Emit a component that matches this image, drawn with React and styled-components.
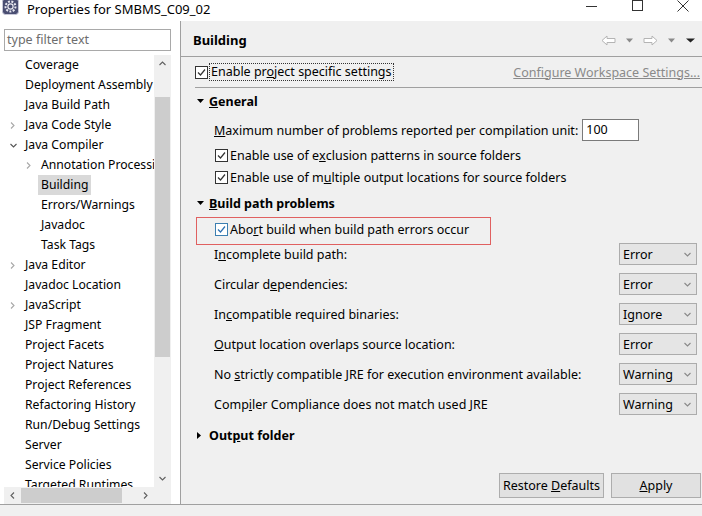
import styled, { createGlobalStyle } from "styled-components";

const GlobalStyle = createGlobalStyle`
  body {
    margin: 0;
    font-family: "Noto Sans", "Liberation Sans", sans-serif;
    font-size: 12px;
    color: #000;
  }
`;

const Window = styled.div`
  width: 702px;
  height: 516px;
  display: flex;
  flex-direction: column;
  overflow: hidden;
  background: #f0f0f0;
`;

const TitleBar = styled.div`
  height: 21px;
  flex-shrink: 0;
  background: #fff;
  display: flex;
  align-items: flex-start;
`;

const TitleIcon = styled.svg`
  margin: -2px 0 0 2px;
`;

const TitleText = styled.div`
  margin-left: 8px;
  font-size: 13px;
  line-height: 18px;
`;

const Controls = styled.div`
  margin-left: auto;
  margin-right: -4px;
  display: flex;
`;

const Ctrl = styled.div`
  width: 46px;
  height: 12px;
  display: flex;
  justify-content: center;
  align-items: flex-start;
`;

const Body = styled.div`
  flex: 1;
  display: flex;
  min-height: 0;
`;

const Sidebar = styled.div`
  width: 181px;
  box-sizing: border-box;
  background: #fff;
  border-right: 1px solid #a0a0a0;
  display: flex;
  flex-direction: column;
  padding: 8px 9px 0 4px;
`;

const Filter = styled.div`
  height: 22px;
  box-sizing: border-box;
  border: 1px solid #a9a9a9;
  color: #6d6d6d;
  padding-left: 2px;
  line-height: 20px;
  font-size: 12.5px;
`;

const TreeBox = styled.div`
  margin-top: 4px;
  flex: 1;
  min-height: 0;
  display: grid;
  grid-template-columns: 1fr 17px;
  grid-template-rows: 1fr 17px;
`;

const TreeList = styled.div`
  overflow: hidden;
`;

const TreeRow = styled.div`
  height: 20px;
  display: flex;
  align-items: center;
  padding-left: ${(p) => p.$level * 16 - 11}px;
  white-space: nowrap;
`;

const ArrowSlot = styled.div`
  width: 16px;
  flex-shrink: 0;
  display: flex;
  align-items: center;
  padding-left: 1px;
  box-sizing: border-box;
`;

const TreeLabel = styled.span`
  line-height: 20px;
  padding: 0 3px;
  margin-left: -3px;
  background: ${(p) => (p.$selected ? "#d9d9d9" : "transparent")};
  font-size: 12.2px;
`;

const VScroll = styled.div`
  background: #f0f0f0;
  display: flex;
  flex-direction: column;
`;

const HScroll = styled.div`
  background: #f0f0f0;
  display: flex;
`;

const ScrollBtn = styled.div`
  width: 17px;
  height: 17px;
  flex-shrink: 0;
  display: flex;
  align-items: center;
  justify-content: center;
`;

const VTrack = styled.div`
  flex: 1;
  padding: 0 1px;
`;

const VThumb = styled.div`
  margin-top: ${(p) => p.$offset}px;
  height: ${(p) => p.$size}px;
  background: #cdcdcd;
`;

const HTrack = styled.div`
  flex: 1;
  padding: 1px 0;
  display: flex;
`;

const HThumb = styled.div`
  margin-left: ${(p) => p.$offset}px;
  width: ${(p) => p.$size}px;
  background: #cdcdcd;
`;

const Corner = styled.div`
  background: #f0f0f0;
`;

const Main = styled.div`
  flex: 1;
  display: flex;
  flex-direction: column;
  min-width: 0;
`;

const Header = styled.div`
  height: 35px;
  flex-shrink: 0;
  border-bottom: 1px solid #a0a0a0;
  display: flex;
  align-items: center;
  padding: 0 7px 0 12px;
`;

const HeaderTitle = styled.div`
  font-weight: bold;
  font-size: 13px;
  margin-top: 2px;
`;

const NavIcons = styled.div`
  margin-left: auto;
  display: flex;
  align-items: center;
  margin-top: 4px;
`;

const NavGap = styled.span`
  width: ${(p) => p.$w}px;
`;

const Content = styled.div`
  flex: 1;
  display: flex;
  flex-direction: column;
  padding: 0 0 6px 14px;
`;

const ProjectRow = styled.div`
  margin-top: 5px;
  height: 20px;
  display: flex;
  align-items: center;
  padding-right: 2px;
`;

const FocusLabel = styled.span`
  padding: 0 1px;
  outline: 1px dotted #333;
  line-height: 16px;
  font-size: 12.5px;
`;

const WorkspaceLink = styled.span`
  margin-left: auto;
  color: #8a8a8a;
  text-decoration: underline;
  font-size: 12.5px;
`;

const Separator = styled.div`
  margin-top: 5px;
  height: 1px;
  background: #a0a0a0;
`;

const SectionHead = styled.div`
  margin-top: ${(p) => p.$top}px;
  height: 20px;
  display: flex;
  align-items: center;
  font-weight: bold;
  font-size: 12.5px;
`;

const Twisty = styled.div`
  width: 14px;
  display: flex;
  align-items: center;
  padding-left: 2px;
  box-sizing: border-box;
`;

const Row = styled.div`
  margin-top: ${(p) => p.$top || 0}px;
  height: 22px;
  display: flex;
  align-items: center;
  padding-left: ${(p) => (p.$check ? 20 : 19)}px;
  font-size: 12.5px;
  white-space: nowrap;
`;

const NumberBox = styled.div`
  margin-left: 4px;
  width: 57px;
  height: 22px;
  box-sizing: border-box;
  background: #fff;
  border: 1px solid #7a7a7a;
  padding-left: 3px;
  line-height: 20px;
`;

const Box = styled.div`
  width: 13px;
  height: 13px;
  box-sizing: border-box;
  border: 1px solid ${(p) => (p.$hot ? "#3c7fb1" : "#333")};
  background: #fff;
  flex-shrink: 0;
  display: flex;
  align-items: center;
  justify-content: center;
  margin-right: 2px;
`;

const Highlight = styled.div`
  margin-top: 4px;
  margin-left: 1px;
  width: 295px;
  height: 28px;
  box-sizing: border-box;
  border: 1px solid #e06060;
  display: flex;
  align-items: center;
  padding-left: 18px;
  padding-bottom: 4px;
  font-size: 12.5px;
`;

const OptionList = styled.div`
  margin-top: -2px;
  display: flex;
  flex-direction: column;
  gap: 8px;
  padding-right: 5px;
`;

const OptionRow = styled.div`
  height: 22px;
  display: flex;
  align-items: center;
  padding-left: 19px;
  font-size: 12.5px;
`;

const Select = styled.div`
  margin-left: auto;
  width: 78px;
  height: 22px;
  box-sizing: border-box;
  background: #e5e5e5;
  border: 1px solid #acacac;
  display: flex;
  align-items: center;
  padding: 0 5px 0 3px;
  font-size: 12.5px;
  justify-content: space-between;
`;

const ButtonBar = styled.div`
  margin-top: auto;
  display: flex;
  justify-content: flex-end;
  gap: 7px;
  padding-right: 1px;
`;

const Button = styled.div`
  width: ${(p) => p.$w}px;
  height: 25px;
  box-sizing: border-box;
  background: #e1e1e1;
  border: 1px solid #adadad;
  display: flex;
  align-items: center;
  justify-content: center;
  font-size: 12.5px;
`;

const BottomStrip = styled.div`
  height: 12px;
  flex-shrink: 0;
  box-sizing: border-box;
  border-top: 1px solid #a0a0a0;
  background: #f0f0f0;
`;

const Chevron = ({ dir, color = "#777" }) => {
  const paths = {
    right: "M1 0.5 L4 3.5 L1 6.5",
    down: "M0.5 1 L3.5 4 L6.5 1",
    up: "M0.5 4 L3.5 1 L6.5 4",
    left: "M4 0.5 L1 3.5 L4 6.5",
  };
  const horizontal = dir === "right" || dir === "left";
  return (
    <svg width={horizontal ? 5 : 7} height={horizontal ? 7 : 5} viewBox={horizontal ? "0 0 5 7" : "0 0 7 5"}>
      <path d={paths[dir]} fill="none" stroke={color} strokeWidth="1.1" />
    </svg>
  );
};

const Triangle = ({ open, color = "#000" }) =>
  open ? (
    <svg width="7" height="4" viewBox="0 0 7 4">
      <path d="M0 0 H7 L3.5 4 Z" fill={color} />
    </svg>
  ) : (
    <svg width="4" height="7" viewBox="0 0 4 7">
      <path d="M0 0 V7 L4 3.5 Z" fill={color} />
    </svg>
  );

const Check = ({ color = "#333" }) => (
  <svg width="9" height="9" viewBox="0 0 9 9">
    <path d="M1 4.5 L3.5 7 L8 1.5" fill="none" stroke={color} strokeWidth="1.2" />
  </svg>
);

const CheckBox = ({ hot }) => (
  <Box $hot={hot}>
    <Check color={hot ? "#2d6fb0" : "#333"} />
  </Box>
);

const tree = [
  { label: "Coverage", level: 1 },
  { label: "Deployment Assembly", level: 1 },
  { label: "Java Build Path", level: 1 },
  { label: "Java Code Style", level: 1, arrow: "right" },
  { label: "Java Compiler", level: 1, arrow: "down" },
  { label: "Annotation Processing", level: 2, arrow: "right" },
  { label: "Building", level: 2, selected: true },
  { label: "Errors/Warnings", level: 2 },
  { label: "Javadoc", level: 2 },
  { label: "Task Tags", level: 2 },
  { label: "Java Editor", level: 1, arrow: "right" },
  { label: "Javadoc Location", level: 1 },
  { label: "JavaScript", level: 1, arrow: "right" },
  { label: "JSP Fragment", level: 1 },
  { label: "Project Facets", level: 1 },
  { label: "Project Natures", level: 1 },
  { label: "Project References", level: 1 },
  { label: "Refactoring History", level: 1 },
  { label: "Run/Debug Settings", level: 1 },
  { label: "Server", level: 1 },
  { label: "Service Policies", level: 1 },
  { label: "Targeted Runtimes", level: 1 },
];

const options = [
  { label: <>I<u>n</u>complete build path:</>, value: "Error" },
  { label: <>Circular d<u>e</u>pendencies:</>, value: "Error" },
  { label: <>In<u>c</u>ompatible required binaries:</>, value: "Ignore" },
  { label: <><u>O</u>utput location overlaps source location:</>, value: "Error" },
  { label: <>No <u>s</u>trictly compatible JRE for execution environment available:</>, value: "Warning" },
  { label: <>Comp<u>i</u>ler Compliance does not match used JRE</>, value: "Warning" },
];

const NavArrow = ({ flip }) => (
  <svg width="15" height="11" viewBox="0 0 15 11" style={flip ? { transform: "scaleX(-1)" } : undefined}>
    <path d="M1 5.5 L6 1 V3.5 H14 V7.5 H6 V10 Z" fill="#fff" stroke="#b4b4b4" />
  </svg>
);

const SmallDrop = ({ color = "#8a8a8a", w = 7 }) => (
  <svg width={w} height="5" viewBox={`0 0 ${w} 5`}>
    <path d={`M0 0.5 H${w} L${w / 2} 4.5 Z`} fill={color} />
  </svg>
);

export default function App() {
  return (
    <Window>
      <GlobalStyle />
      <TitleBar>
        <TitleIcon width="17" height="17" viewBox="0 0 17 17">
          <rect x="0.5" y="0.5" width="16" height="16" rx="3" fill="#4a4e72" stroke="#c8c8d8" />
          <circle cx="8.5" cy="8.5" r="5" fill="none" stroke="#e8e8f0" strokeWidth="2" strokeDasharray="2 1.4" />
          <circle cx="8.5" cy="8.5" r="2.6" fill="#4a4e72" stroke="#e8e8f0" strokeWidth="1.2" />
        </TitleIcon>
        <TitleText>Properties for SMBMS_C09_02</TitleText>
        <Controls>
          <Ctrl>
            <svg width="11" height="12" viewBox="0 0 11 12">
              <path d="M0 6.5 H11" stroke="#333" strokeWidth="1" />
            </svg>
          </Ctrl>
          <Ctrl>
            <svg width="11" height="12" viewBox="0 0 11 12">
              <rect x="0.5" y="0.5" width="10" height="10" fill="none" stroke="#333" />
            </svg>
          </Ctrl>
          <Ctrl>
            <svg width="12" height="12" viewBox="0 0 12 12">
              <path d="M0.5 0.5 L11.5 11.5 M11.5 0.5 L0.5 11.5" stroke="#333" strokeWidth="1" />
            </svg>
          </Ctrl>
        </Controls>
      </TitleBar>
      <Body>
        <Sidebar>
          <Filter>type filter text</Filter>
          <TreeBox>
            <TreeList>
              {tree.map((item) => (
                <TreeRow key={item.label} $level={item.level}>
                  <ArrowSlot>
                    {item.arrow === "right" && <Chevron dir="right" color="#a8a8a8" />}
                    {item.arrow === "down" && <Chevron dir="down" color="#555" />}
                  </ArrowSlot>
                  <TreeLabel $selected={item.selected}>{item.label}</TreeLabel>
                </TreeRow>
              ))}
            </TreeList>
            <VScroll>
              <ScrollBtn>
                <Chevron dir="up" color="#606060" />
              </ScrollBtn>
              <VTrack>
                <VThumb $offset={25} $size={260} />
              </VTrack>
              <ScrollBtn>
                <Chevron dir="down" color="#606060" />
              </ScrollBtn>
            </VScroll>
            <HScroll>
              <ScrollBtn>
                <Chevron dir="left" color="#606060" />
              </ScrollBtn>
              <HTrack>
                <HThumb $offset={0} $size={101} />
              </HTrack>
              <ScrollBtn>
                <Chevron dir="right" color="#606060" />
              </ScrollBtn>
            </HScroll>
            <Corner />
          </TreeBox>
        </Sidebar>
        <Main>
          <Header>
            <HeaderTitle>Building</HeaderTitle>
            <NavIcons>
              <NavArrow />
              <NavGap $w={10} />
              <SmallDrop />
              <NavGap $w={10} />
              <NavArrow flip />
              <NavGap $w={10} />
              <SmallDrop />
              <NavGap $w={11} />
              <SmallDrop color="#222" w={9} />
            </NavIcons>
          </Header>
          <Content>
            <ProjectRow>
              <CheckBox />
              <FocusLabel>Enable pr<u>o</u>ject specific settings</FocusLabel>
              <WorkspaceLink>Configure Workspace Settings...</WorkspaceLink>
            </ProjectRow>
            <Separator />
            <SectionHead $top={3}>
              <Twisty>
                <Triangle open />
              </Twisty>
              <u>G</u>eneral
            </SectionHead>
            <Row $top={8}>
              <span>
                <u>M</u>aximum number of problems reported per compilation unit:
              </span>
              <NumberBox>100</NumberBox>
            </Row>
            <Row $top={3} $check>
              <CheckBox />
              Enable use of e<u>x</u>clusion patterns in source folders
            </Row>
            <Row $check>
              <CheckBox />
              Enable use of m<u>u</u>ltiple output locations for source folders
            </Row>
            <SectionHead $top={5}>
              <Twisty>
                <Triangle open />
              </Twisty>
              <u>B</u>uild path problems
            </SectionHead>
            <Highlight>
              <CheckBox hot />
              Abo<u>r</u>t build when build path errors occur
            </Highlight>
            <OptionList>
              {options.map((opt, i) => (
                <OptionRow key={i}>
                  <span>{opt.label}</span>
                  <Select>
                    {opt.value}
                    <Chevron dir="down" color="#888" />
                  </Select>
                </OptionRow>
              ))}
            </OptionList>
            <SectionHead $top={10}>
              <Twisty>
                <Triangle />
              </Twisty>
              Out<u>p</u>ut folder
            </SectionHead>
            <ButtonBar>
              <Button $w={105}>
                <span>
                  Restore <u>D</u>efaults
                </span>
              </Button>
              <Button $w={90}>
                <span>
                  <u>A</u>pply
                </span>
              </Button>
            </ButtonBar>
          </Content>
        </Main>
      </Body>
      <BottomStrip />
    </Window>
  );
}
